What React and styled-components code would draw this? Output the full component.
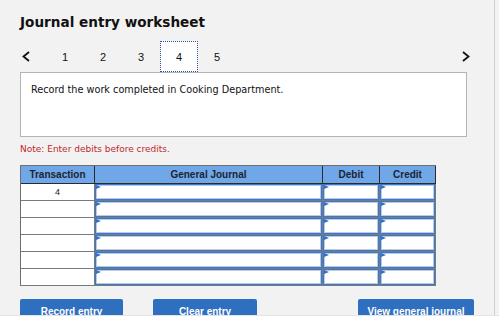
import React from "react";
import styled, { createGlobalStyle } from "styled-components";

const GlobalStyle = createGlobalStyle`
  html, body {
    margin: 0;
    padding: 0;
    background: #ffffff;
  }
`;

const Frame = styled.div`
  width: 499px;
  height: 315px;
  overflow: hidden;
  background: #f2f2f2;
  border-bottom: 1px solid #e4e4e4;
`;

const Sheet = styled.div`
  width: 495px;
  height: 100%;
  box-sizing: border-box;
  border-right: 1px solid #cfcfcf;
  padding: 13px 0 0 20px;
`;

const Title = styled.h1`
  margin: 0;
  height: 18px;
  font-family: "DejaVu Sans", Verdana, sans-serif;
  font-size: 13.6px;
  line-height: 18px;
  font-weight: bold;
  color: #111;
`;

const Nav = styled.div`
  display: flex;
  align-items: center;
  height: 31px;
  margin-top: 10px;
  width: 452px;
`;

const Arrow = styled.button`
  display: flex;
  align-items: center;
  justify-content: center;
  width: 12px;
  height: 31px;
  padding: 0;
  margin: 0 ${(p) => (p.right ? "0 0 auto" : "14px 0 0")};
  border: none;
  background: none;
  cursor: pointer;
`;

const Tab = styled.div`
  width: 38px;
  height: 31px;
  box-sizing: border-box;
  display: flex;
  align-items: center;
  justify-content: center;
  font-family: "Liberation Sans", Arial, sans-serif;
  font-size: 11px;
  color: #111;
  background: ${(p) => (p.active ? "#ffffff" : "transparent")};
  border: 1px dotted ${(p) => (p.active ? "#2e4f8f" : "transparent")};
`;

const Prompt = styled.div`
  width: 447px;
  height: 65px;
  box-sizing: border-box;
  background: #fff;
  border: 1px solid #b4b4b4;
  padding: 10px 10px;
  font-family: "DejaVu Sans", Verdana, sans-serif;
  font-size: 9.7px;
  line-height: 14px;
  color: #111;
`;

const Note = styled.p`
  margin: 5px 0 0;
  font-family: "DejaVu Sans", Verdana, sans-serif;
  font-size: 9px;
  line-height: 14px;
  color: #c0282d;
`;

const Grid = styled.div`
  margin-top: 9px;
  width: 415px;
  display: grid;
  grid-template-columns: 74px 228px 57px 56px;
  border-left: 1px solid #6e6e6e;
  border-top: 1px solid #6e6e6e;
  background: #7a7a7a;
`;

const Head = styled.div`
  height: 17px;
  display: flex;
  align-items: center;
  justify-content: center;
  background: #6fa7e8;
  border-right: 1px solid #2b2b2b;
  border-bottom: 1px solid #2b2b2b;
  font-family: "Liberation Sans", Arial, sans-serif;
  font-size: 10px;
  font-weight: bold;
  color: #1d2430;
`;

const TransCell = styled.div`
  height: 16px;
  display: flex;
  align-items: center;
  justify-content: center;
  background: #fff;
  border-right: 1px solid #7a7a7a;
  border-bottom: 1px solid #7a7a7a;
  font-family: "Liberation Sans", Arial, sans-serif;
  font-size: 9px;
  color: #222;
`;

const InputCell = styled.div`
  position: relative;
  height: 16px;
  border-right: 1px solid #7a7a7a;
  border-bottom: 1px solid #7a7a7a;
`;

const Field = styled.input`
  display: block;
  width: 100%;
  height: 100%;
  box-sizing: border-box;
  margin: 0;
  padding: 0 4px;
  border: 1px solid #3f77c4;
  box-shadow: inset 0 0 0 1px rgba(90, 140, 210, 0.45);
  background: #fff;
  outline: none;
  font-size: 10px;
`;

const Flag = styled.span`
  position: absolute;
  left: 1px;
  top: 1px;
  width: 0;
  height: 0;
  border-left: 5px solid #2f6fd0;
  border-top: 2px solid transparent;
  border-bottom: 2px solid transparent;
  pointer-events: none;
`;

const Actions = styled.div`
  display: flex;
  margin-top: 13px;
  width: 454px;
`;

const Button = styled.button`
  width: ${(p) => p.w}px;
  height: 24px;
  margin-left: ${(p) => p.gap || 0}px;
  padding: 0;
  border: none;
  border-radius: 2px;
  background: #2e6fc0;
  color: #fff;
  font-family: "Liberation Sans", Arial, sans-serif;
  font-size: 10px;
  font-weight: bold;
  cursor: pointer;
`;

const Chevron = ({ right }) => (
  <svg width="8" height="11" viewBox="0 0 8 11">
    <polyline
      points={right ? "1,1 6.5,5.5 1,10" : "7,1 1.5,5.5 7,10"}
      fill="none"
      stroke="#111"
      strokeWidth="1.8"
    />
  </svg>
);

const rows = ["4", "", "", "", "", ""];

export default function App() {
  return (
    <>
      <GlobalStyle />
      <Frame>
        <Sheet>
          <Title>Journal entry worksheet</Title>
          <Nav>
            <Arrow aria-label="previous">
              <Chevron />
            </Arrow>
            {[1, 2, 3, 4, 5].map((n) => (
              <Tab key={n} active={n === 4}>
                {n}
              </Tab>
            ))}
            <Arrow right aria-label="next">
              <Chevron right />
            </Arrow>
          </Nav>
          <Prompt>Record the work completed in Cooking Department.</Prompt>
          <Note>Note: Enter debits before credits.</Note>
          <Grid>
            <Head>Transaction</Head>
            <Head>General Journal</Head>
            <Head>Debit</Head>
            <Head>Credit</Head>
            {rows.map((t, i) => (
              <React.Fragment key={i}>
                <TransCell>{t}</TransCell>
                {[0, 1, 2].map((c) => (
                  <InputCell key={c}>
                    <Field />
                    <Flag />
                  </InputCell>
                ))}
              </React.Fragment>
            ))}
          </Grid>
          <Actions>
            <Button w={103}>Record entry</Button>
            <Button w={104} gap={30}>
              Clear entry
            </Button>
            <Button w={116} gap={101}>
              View general journal
            </Button>
          </Actions>
        </Sheet>
      </Frame>
    </>
  );
}
